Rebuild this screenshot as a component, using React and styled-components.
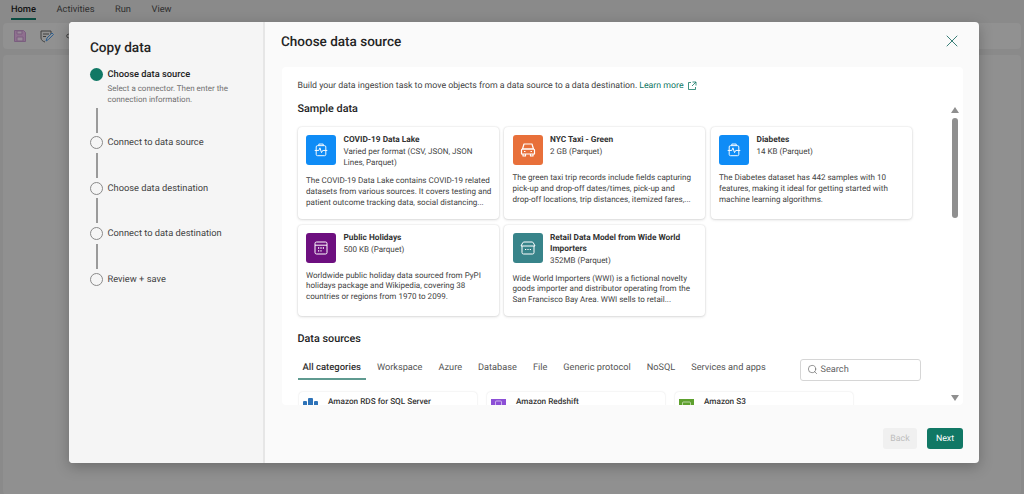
import React from "react";
import styled, { createGlobalStyle } from "styled-components";
import { Search, X } from "lucide-react";

const Global = createGlobalStyle`
  html, body { margin: 0; padding: 0; height: 100%; overflow: hidden; }
  body { font-family: Roboto, "Noto Sans", sans-serif; color: #242424; text-rendering: geometricPrecision; }
  #root { height: 100%; }
  * { box-sizing: border-box; }
`;

const Page = styled.div`
  position: relative;
  width: 1024px;
  height: 494px;
  background: #8a8a8a;
  overflow: hidden;
`;
const TopNav = styled.nav`
  display: flex;
  gap: 20.500px;
  height: 22px;
  padding: 4px 0 0 11px;
`;
const NavItem = styled.div`
  height: 16px;
  font-size: 9.300px;
  line-height: 12px;
  color: ${p => (p.$active ? "#121212" : "#2e2e2e")};
  font-weight: ${p => (p.$active ? 500 : 400)};
  border-bottom: ${p => (p.$active ? "2px solid #0b4b40" : "none")};
`;
const Ribbon = styled.div`
  display: flex;
  align-items: center;
  gap: 12px;
  height: 26px;
  margin: 1px 0 0 3px;
  padding-left: 10px;
  background: #919191;
  border-radius: 4px;
  width: 1018px;
`;
const Canvas = styled.div`
  margin: 6px 0 0 3px;
  width: 1018px;
  height: 440px;
  background: #909090;
  border-radius: 4px;
`;
const Modal = styled.div`
  position: absolute;
  left: 69px;
  top: 22px;
  width: 910px;
  height: 441px;
  display: flex;
  background: #fafafa;
  border-radius: 4px;
  overflow: hidden;
  box-shadow: 0 4px 14px rgba(0,0,0,.25);
`;
const Side = styled.aside`
  flex: none;
  width: 196px;
  background: #f5f5f5;
  border-right: 2px solid #e6e6e6;
  padding: 17px 0 0 21px;
`;
const SideTitle = styled.h2`
  margin: 0 0 10px;
  font-size: 13.600px;
  line-height: 19px;
  font-weight: 500;
  color: #242424;
`;
const Step = styled.div`
  display: flex;
  gap: 4.500px;
`;
const Dot = styled.div`
  width: 13px;
  height: 13px;
  border-radius: 50%;
  flex: none;
  background: ${p => (p.$on ? "#117865" : "transparent")};
  border: ${p => (p.$on ? "none" : "1px solid #8a8a8a")};
`;
const StepBody = styled.div`
  width: 130px;
`;
const StepName = styled.div`
  font-size: 9.300px;
  line-height: 13px;
  font-weight: ${p => (p.$on ? 500 : 400)};
  color: ${p => (p.$on ? "#242424" : "#424242")};
`;
const StepHint = styled.div`
  margin-top: 2px;
  font-size: 7.970px;
  line-height: 11px;
  color: #707070;
`;
const Line = styled.div`
  width: 2px;
  height: 25px;
  margin: ${p => (p.$first ? "2.500px" : "3.800px")} 0 ${p => (p.$first ? "3.500px" : "3.800px")} 5.500px;
  background: #9a9a9a;
`;
const Main = styled.main`
  flex: 1;
  min-width: 0;
  display: flex;
  flex-direction: column;
  padding: 0 16px 0 17px;
`;
const Head = styled.header`
  display: flex;
  justify-content: space-between;
  align-items: center;
  height: 40px;
  margin-bottom: 5px;
`;
const Title = styled.h1`
  margin: 0 0 0 -1px;
  font-size: 13.500px;
  font-weight: 500;
  color: #242424;
`;
const Close = styled.div`
  display: flex;
  color: #3a7f78;
  margin: 0 1px 2px 0;
`;
const Panel = styled.section`
  position: relative;
  height: 338px;
  background: #fff;
  border-radius: 4px;
  padding: 12px 0 0 15.500px;
  overflow: hidden;
`;
const Intro = styled.p`
  margin: 0;
  font-size: 8.770px;
  line-height: 14px;
  color: #424242;
  display: flex;
  align-items: center;
  gap: 2px;
`;
const Link = styled.span`
  color: #117865;
`;
const Heading = styled.h3`
  margin: ${p => p.$m};
  font-size: 10.800px;
  line-height: 14px;
  font-weight: 500;
  color: #242424;
`;
const CardGrid = styled.div`
  display: grid;
  grid-template-columns: repeat(3, 201px);
  grid-auto-rows: 91.500px;
  gap: 6px 5.500px;
`;
const Card = styled.article`
  padding: 8px 8.500px 0;
  background: #fff;
  border-radius: 4px;
  box-shadow: 0 0 2px rgba(0,0,0,.14), 0 1px 3px rgba(0,0,0,.12);
  overflow: hidden;
`;
const CardTop = styled.div`
  display: flex;
  gap: 7.500px;
`;
const IconTile = styled.div`
  width: 30px;
  height: 30px;
  flex: none;
  display: flex;
  align-items: center;
  justify-content: center;
  border-radius: 3px;
  background: ${p => p.$c};
`;
const CardName = styled.div`
  font-size: 8.300px;
  line-height: 11px;
  font-weight: 700;
  color: #333;
`;
const CardMeta = styled.div`
  font-size: 8px;
  line-height: 11px;
  color: #424242;
  white-space: pre-line;
`;
const CardText = styled.p`
  margin: 8px 0 0;
  font-size: 8.050px;
  line-height: 10.800px;
  color: #424242;
  white-space: pre;
`;
const Tabs = styled.div`
  display: flex;
  align-items: flex-start;
  width: 623px;
  margin-top: 13px;
  height: 27px;
`;
const Tab = styled.div`
  height: 20.500px;
  margin-top: 1px;
  padding: 0 5px;
  margin-right: 6px;
  font-size: ${p => (p.$on ? "9.500px" : "9.200px")};
  line-height: 16px;
  font-weight: ${p => (p.$on ? 500 : 400)};
  color: ${p => (p.$on ? "#333" : "#555")};
  border-bottom: ${p => (p.$on ? "2px solid #5f9a90" : "none")};
  white-space: nowrap;
`;
const SearchBox = styled.div`
  margin: 0 0 0 auto;
  width: 121px;
  height: 22px;
  flex: none;
  border: 1px solid #d6d6d6;
  border-radius: 3px;
  display: flex;
  align-items: center;
  gap: 3px;
  padding-left: 6px;
  font-size: 9.200px;
  color: #666;
`;
const SourceRow = styled.div`
  display: flex;
  gap: 10px;
  margin-top: 6px;
  margin-left: 1px;
`;
const Source = styled.div`
  width: 178px;
  height: 40px;
  display: flex;
  gap: 10px;
  padding: 5px 0 0 4.500px;
  border-radius: 4px;
  background: #fff;
  box-shadow: 0 0 2px rgba(0,0,0,.14);
  font-size: 8.200px;
  line-height: 11px;
  font-weight: 500;
  color: #333;
`;
const SourceLogo = styled.div`
  width: 15px;
  flex: none;
  padding-top: 1px;
`;
const Scroll = styled.div`
  position: absolute;
  top: 38px;
  right: 2px;
  bottom: 0;
  width: 12px;
  display: flex;
  flex-direction: column;
  align-items: center;
`;
const Thumb = styled.div`
  width: 6px;
  height: 100px;
  margin-top: 5px;
  background: #8f8f8f;
  border-radius: 3px;
`;
const Arrow = styled.div`
  width: 0;
  height: 0;
  border-left: 4px solid transparent;
  border-right: 4px solid transparent;
  ${p => (p.$down ? "border-top: 6px solid #8f8f8f; margin-top: auto; margin-bottom: 4px;" : "border-bottom: 6px solid #8f8f8f; margin-top: 2px;")}
`;
const Footer = styled.footer`
  flex: 1;
  display: flex;
  justify-content: flex-end;
  align-items: flex-start;
  gap: 10px;
  padding-top: 23px;
`;
const Btn = styled.div`
  height: 21px;
  width: ${p => (p.$primary ? "36px" : "34px")};
  display: flex;
  align-items: center;
  justify-content: center;
  font-size: 8.800px;
  border-radius: 3px;
  background: ${p => (p.$primary ? "#117865" : "#f0f0f0")};
  color: ${p => (p.$primary ? "#fff" : "#bdbdbd")};
`;

const Heart = () => (
  <svg width="14" height="16" viewBox="0 0 16 18" fill="none" stroke="#fff" strokeWidth="1.100" strokeLinejoin="round">
    <rect x="2.500" y="4" width="11" height="11.500" rx="1.500" />
    <path d="M5.500 4V2.200h5V4" />
    <path d="M.8 9.500h4.700l1.300-3 1.800 5.500 1.400-2.500h5.200" />
  </svg>
);
const Car = () => (
  <svg width="18" height="18" viewBox="0 0 18 18" fill="none" stroke="#fff" strokeWidth="1.200" strokeLinejoin="round">
    <path d="M5 3h8l1.500 5h-11z" />
    <path d="M3.500 8h11a1 1 0 0 1 1 1v4h-13V9a1 1 0 0 1 1-1z" />
    <path d="M4 13v2h2.500v-2M11.500 13v2H14v-2" />
    <path d="M5 10.500h1.500M11.500 10.500H13" />
  </svg>
);
const Calendar = () => (
  <svg width="16" height="16" viewBox="0 0 16 16" fill="none" stroke="#fff" strokeWidth="1">
    <rect x="2" y="2" width="12" height="12" rx="1.500" />
    <path d="M2 5.200h12" />
    <path d="M5 8h1.200M7.400 8h1.200M9.800 8H11M5 10.800h1.200M7.400 10.800h1.200" strokeWidth="1.300" />
  </svg>
);
const Store = () => (
  <svg width="18" height="16" viewBox="0 0 18 16" fill="none" stroke="#fff" strokeWidth="1">
    <path d="M5 2h8a1.500 1.500 0 0 1 1.300.8L16 6H2l1.700-3.200A1.500 1.500 0 0 1 5 2z" strokeLinejoin="round" />
    <path d="M3 6v6.500A1.500 1.500 0 0 0 4.500 14h9a1.500 1.500 0 0 0 1.500-1.500V6" />
    <path d="M6 9.500h1.200M8.400 9.500h1.200M10.800 9.500H12" strokeWidth="1.200" />
  </svg>
);
const Save = () => (
  <svg width="14" height="14" viewBox="0 0 14 14" fill="#8f6f8f" stroke="#7a5f7f" strokeWidth="1">
    <path d="M1.500 1.500h9l2 2v9h-11z" />
    <path d="M4 2h5v3H4zM4 8h6v4H4z" fill="#9a8a9a" />
  </svg>
);
const Edit = () => (
  <svg width="15" height="15" viewBox="0 0 15 15" fill="none" stroke="#3f3f3f" strokeWidth="1">
    <path d="M2 2h10v3M2 2v7c0 2 2 3.500 4 4" />
    <path d="M4 5h6M4 7.500h3" />
    <path d="M7 12l1-3 5-5 1.500 1.500-5 5z" stroke="#2f5f8f" />
  </svg>
);
const Ring = () => (
  <svg width="6" height="6" viewBox="0 0 6 6" fill="none" stroke="#3f3f3f" strokeWidth="1">
    <circle cx="2.500" cy="3" r="1.800" />
  </svg>
);
const External = () => (
  <svg width="10" height="10" viewBox="0 0 10 10" fill="none" stroke="#117865" strokeWidth=".8" style={{ marginLeft: 1 }}>
    <path d="M4 1.500H1.500v7h7V6" />
    <path d="M5.500 1h3.500v3.500M9 1L5 5" />
  </svg>
);
const RdsLogo = () => (
  <svg width="15" height="12" viewBox="0 0 15 12"><rect x="0" y="3" width="4" height="9" rx="1" fill="#2e73b8" /><rect x="5" y="0" width="5" height="12" rx="1" fill="#2e73b8" /><rect x="11" y="3" width="4" height="9" rx="1" fill="#2e73b8" /></svg>
);
const RedshiftLogo = () => (
  <svg width="15" height="12" viewBox="0 0 15 12"><rect y="1" width="15" height="11" fill="#8c4fd6" /><rect x="4.500" y="3" width="6" height="8" rx="1" fill="none" stroke="#fff" strokeWidth=".8" opacity=".7" /></svg>
);
const S3Logo = () => (
  <svg width="15" height="12" viewBox="0 0 15 12"><rect y="1" width="15" height="11" fill="#5ea02e" /><rect x="3.500" y="4" width="8" height="5" rx="1" fill="none" stroke="#fff" strokeWidth=".8" opacity=".7" /></svg>
);

const steps = ["Connect to data source", "Choose data destination", "Connect to data destination", "Review + save"];
const cards = [
  { c: "#0f8cf6", i: <Heart />, n: "COVID-19 Data Lake", m: "Varied per format (CSV, JSON, JSON\nLines, Parquet)", t: "The COVID-19 Data Lake contains COVID-19 related\ndatasets from various sources. It covers testing and\npatient outcome tracking data, social distancing..." },
  { c: "#e8703a", i: <Car />, n: "NYC Taxi - Green", m: "2 GB (Parquet)", t: "The green taxi trip records include fields capturing\npick-up and drop-off dates/times, pick-up and\ndrop-off locations, trip distances, itemized fares,..." },
  { c: "#0f8cf6", i: <Heart />, n: "Diabetes", m: "14 KB (Parquet)", t: "The Diabetes dataset has 442 samples with 10\nfeatures, making it ideal for getting started with\nmachine learning algorithms." },
  { c: "#6d0f7f", i: <Calendar />, n: "Public Holidays", m: "500 KB (Parquet)", t: "Worldwide public holiday data sourced from PyPI\nholidays package and Wikipedia, covering 38\ncountries or regions from 1970 to 2099." },
  { c: "#38848a", i: <Store />, n: "Retail Data Model from Wide World Importers", m: "352MB (Parquet)", t: "Wide World Importers (WWI) is a fictional novelty\ngoods importer and distributor operating from the\nSan Francisco Bay Area. WWI sells to retail..." },
];
const tabs = ["All categories", "Workspace", "Azure", "Database", "File", "Generic protocol", "NoSQL", "Services and apps"];
const sources = [["Amazon RDS for SQL Server", <RdsLogo />], ["Amazon Redshift", <RedshiftLogo />], ["Amazon S3", <S3Logo />]];

export default function App() {
  return (
    <Page>
      <Global />
      <TopNav>
        <NavItem $active>Home</NavItem>
        <NavItem>Activities</NavItem>
        <NavItem>Run</NavItem>
        <NavItem>View</NavItem>
      </TopNav>
      <Ribbon><Save /><Edit /><Ring /></Ribbon>
      <Canvas />
      <Modal>
        <Side>
          <SideTitle>Copy data</SideTitle>
          <Step>
            <Dot $on />
            <StepBody>
              <StepName $on>Choose data source</StepName>
              <StepHint>Select a connector. Then enter the connection information.</StepHint>
            </StepBody>
          </Step>
          {steps.map((s, i) => (
            <React.Fragment key={s}>
              <Line $first={i === 0} />
              <Step><Dot /><StepBody><StepName>{s}</StepName></StepBody></Step>
            </React.Fragment>
          ))}
        </Side>
        <Main>
          <Head>
            <Title>Choose data source</Title>
            <Close><X size={20} strokeWidth={1.2} /></Close>
          </Head>
          <Panel>
            <Intro>Build your data ingestion task to move objects from a data source to a data destination. <Link>Learn more</Link><External /></Intro>
            <Heading $m="9px 0 11px">Sample data</Heading>
            <CardGrid>
              {cards.map(c => (
                <Card key={c.n}>
                  <CardTop>
                    <IconTile $c={c.c}>{c.i}</IconTile>
                    <div>
                      <CardName>{c.n}</CardName>
                      <CardMeta>{c.m}</CardMeta>
                    </div>
                  </CardTop>
                  <CardText>{c.t}</CardText>
                </Card>
              ))}
            </CardGrid>
            <Heading $m="15.500px 0 0">Data sources</Heading>
            <Tabs>
              {tabs.map((t, i) => <Tab key={t} $on={i === 0}>{t}</Tab>)}
              <SearchBox><Search size={11} strokeWidth={1.3} color="#555" />Search</SearchBox>
            </Tabs>
            <SourceRow>
              {sources.map(([n, logo]) => <Source key={n}><SourceLogo>{logo}</SourceLogo><span>{n}</span></Source>)}
            </SourceRow>
            <Scroll><Arrow /><Thumb /><Arrow $down /></Scroll>
          </Panel>
          <Footer>
            <Btn>Back</Btn>
            <Btn $primary>Next</Btn>
          </Footer>
        </Main>
      </Modal>
    </Page>
  );
}
